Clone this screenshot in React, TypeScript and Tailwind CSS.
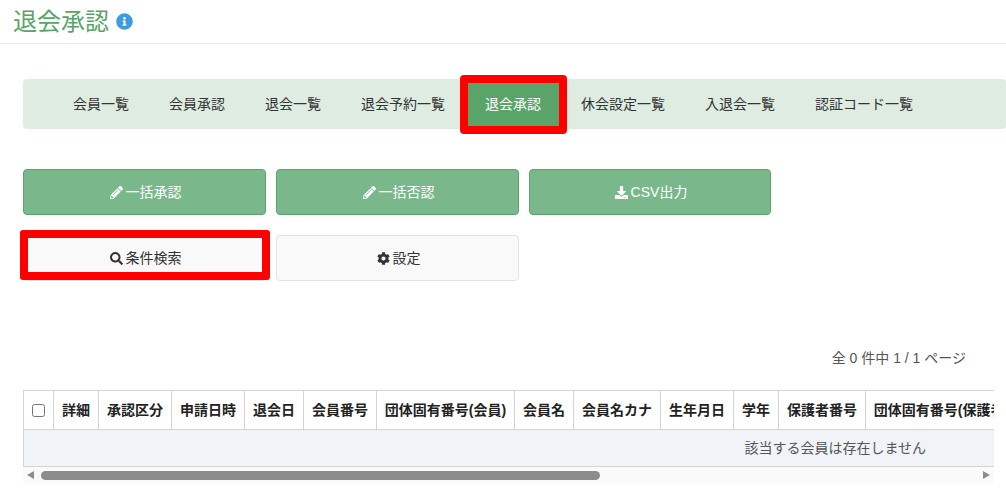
import React from 'react';
import { FaInfoCircle, FaPencilAlt, FaDownload, FaSearch, FaCog } from 'react-icons/fa';

const NAV_ITEMS = ['会員一覧', '会員承認', '退会一覧', '退会予約一覧', '退会承認', '休会設定一覧', '入退会一覧', '認証コード一覧'];

// column widths measured off the table header
const COLUMNS: [string, string][] = [
  ['詳細', 'w-[45px]'],
  ['承認区分', 'w-[73px]'],
  ['申請日時', 'w-[73px]'],
  ['退会日', 'w-[59px]'],
  ['会員番号', 'w-[73px]'],
  ['団体固有番号(会員)', 'w-[138px]'],
  ['会員名', 'w-[59px]'],
  ['会員名カナ', 'w-[87px]'],
  ['生年月日', 'w-[73px]'],
  ['学年', 'w-[45px]'],
  ['保護者番号', 'w-[87px]'],
  ['団体固有番号(保護者)', 'w-[152px]'],
];

const ActionButton: React.FC<{ icon: React.ReactNode; label: string; green?: boolean; highlight?: boolean; width?: string }> = ({
  icon,
  label,
  green,
  highlight,
  width = 'w-[243px]',
}) => (
  <div
    className={`relative ${width} h-[46px] pl-[2px] flex items-center justify-center gap-[3px] rounded border text-[14px] ${
      green ? 'bg-[#7ab88c] border-[#5aa469] text-white' : 'bg-[#f9f9f9] border-[#e2e2e2] text-[#333]'
    }`}
  >
    {icon}
    <span>{label}</span>
    {highlight && <div className="absolute left-[-4px] top-[-6px] w-[250px] h-[50px] border-[8px] border-[#ff0000] rounded-[3px]" />}
  </div>
);

export default function App() {
  return (
    <div className="w-[1006px] h-[494px] overflow-hidden bg-white text-[#333] font-['Liberation_Sans','Noto_Sans_CJK_JP',sans-serif]">
      {/* Title */}
      <div className="h-[44px] border-b border-[#eaeaea] pl-[13px] flex items-center gap-[7px]">
        <h1 className="text-[24px] leading-none text-[#5aa469]">退会承認</h1>
        <FaInfoCircle className="w-[17px] h-[17px] text-[#3d9be0]" />
      </div>

      <div className="pl-[23px]">
        {/* Tabs */}
        <div className="mt-[35px] w-[983px] h-[50px] flex items-center pl-[30px] bg-[#deece2] rounded">
          {NAV_ITEMS.map((item) => {
            const active = item === '退会承認';
            return (
              <div key={item} className={`relative h-[50px] px-[20px] flex items-center text-[14px] ${active ? 'bg-[#5aa469] text-white' : 'text-[#333]'}`}>
                {item}
                {active && <div className="absolute left-[-5px] right-[-6px] top-[-4px] bottom-[-5px] border-[8px] border-[#ff0000] rounded-[4px]" />}
              </div>
            );
          })}
        </div>

        {/* Actions */}
        <div className="mt-[40px] flex gap-[10px]">
          <ActionButton green icon={<FaPencilAlt className="w-[13px] h-[13px]" />} label="一括承認" />
          <ActionButton green icon={<FaPencilAlt className="w-[13px] h-[13px]" />} label="一括否認" />
          <ActionButton green width="w-[242px]" icon={<FaDownload className="w-[13px] h-[13px]" />} label="CSV出力" />
        </div>
        <div className="mt-[20px] flex gap-[10px]">
          <ActionButton highlight icon={<FaSearch className="w-[13px] h-[13px]" />} label="条件検索" />
          <ActionButton icon={<FaCog className="w-[13px] h-[13px]" />} label="設定" />
        </div>

        {/* Pager */}
        <div className="mt-[68px] w-[943px] text-right text-[14px] leading-[18px] text-[#555]">全 0 件中 1 / 1 ページ</div>

        {/* Table */}
        <div className="mt-[23px] w-[971px] overflow-hidden">
          <div className="w-[1200px]">
            <div className="h-[40px] flex border border-[#d4d4d4] text-[14px] font-bold text-[#222]">
              <div className="w-[29px] shrink-0 flex items-center justify-center">
                <input type="checkbox" className="w-[13px] h-[13px]" />
              </div>
              {COLUMNS.map(([name, width]) => (
                <div key={name} className={`${width} shrink-0 border-l border-[#d4d4d4] flex items-center justify-center whitespace-nowrap`}>
                  {name}
                </div>
              ))}
            </div>
            <div className="h-[37px] border-x border-b border-[#d4d4d4] bg-[#f0f3f8]">
              <div className="w-[971px] h-full flex items-center justify-end pr-[69px] text-[14px] text-[#555]">該当する会員は存在しません</div>
            </div>
          </div>
          {/* Scrollbar */}
          <div className="h-[16px] bg-[#fafafa] flex items-center px-[4px]">
            <div className="w-0 h-0 border-y-[4px] border-y-transparent border-r-[7px] border-r-[#8c8c8c]" />
            <div className="ml-[7px] w-[559px] h-[9px] rounded-full bg-[#8c8c8c]" />
            <div className="ml-auto w-0 h-0 border-y-[4px] border-y-transparent border-l-[7px] border-l-[#8c8c8c]" />
          </div>
        </div>
      </div>
    </div>
  );
}
